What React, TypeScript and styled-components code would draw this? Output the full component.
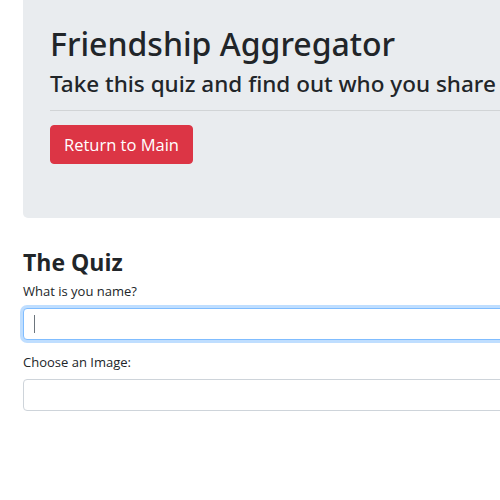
import React from "react";
import styled, { createGlobalStyle } from "styled-components";

const Global = createGlobalStyle`
  html, body { margin: 0; padding: 0; background: #fff; overflow: hidden; }
  body {
    font-family: "Open Sans", "Noto Sans", "Liberation Sans", sans-serif;
    color: #212529;
    font-size: 13px;
    line-height: 1.5;
  }
`;

const Page = styled.div`
  width: 760px;
  padding-left: 23px;
`;

const Jumbotron = styled.section`
  background: #e9ecef;
  border-radius: 0 0 5px 5px;
  padding: 24px 27px 54px;
`;

const Title = styled.h1`
  margin: 0 0 6px;
  font-family: "Noto Sans", "Open Sans", sans-serif;
  font-size: 32px;
  font-weight: 500;
  line-height: 40px;
  white-space: nowrap;
`;

const Subtitle = styled.h3`
  margin: 0;
  font-family: "Noto Sans", "Open Sans", sans-serif;
  font-size: 22.5px;
  font-weight: 500;
  line-height: 28px;
  white-space: nowrap;
`;

const Rule = styled.hr`
  margin: 12px 0 14px;
  border: 0;
  border-top: 1px solid rgba(0, 0, 0, 0.1);
`;

const DangerButton = styled.button`
  display: inline-block;
  height: 39px;
  padding: 2px 13px 0;
  background: #dc3545;
  border: 1px solid #dc3545;
  border-radius: 4px;
  color: #fff;
  font-family: inherit;
  font-size: 16.5px;
  line-height: 1;
  cursor: pointer;
`;

const QuizTitle = styled.h3`
  margin: 30px 0 6px;
  font-size: 23px;
  font-weight: 700;
  line-height: 28px;
`;

const Label = styled.label`
  display: block;
  margin-bottom: 6.5px;
  font-size: 13px;
  line-height: 19.5px;
`;

const Group = styled.div`
  margin-bottom: 13px;
`;

const Field = styled.div<{ $focused?: boolean }>`
  position: relative;
  box-sizing: border-box;
  height: 32px;
  border: 1px solid ${(p) => (p.$focused ? "#80bdff" : "#ced4da")};
  border-radius: 4px;
  background: #fff;
  box-shadow: ${(p) => (p.$focused ? "0 0 0 3px rgba(0,123,255,0.25)" : "none")};
`;

const Input = styled.input`
  box-sizing: border-box;
  width: 100%;
  height: 100%;
  border: 0;
  outline: none;
  background: transparent;
  padding: 0 10px;
  font-family: inherit;
  font-size: 13px;
  color: #495057;
  caret-color: transparent;
`;

const Caret = styled.span`
  position: absolute;
  left: 10px;
  top: 6px;
  width: 1px;
  height: 18px;
  background: #6c757d;
`;

export default function App() {
  return (
    <>
      <Global />
      <Page>
        <Jumbotron>
          <Title>Friendship Aggregator</Title>
          <Subtitle>Take this quiz and find out who you share</Subtitle>
          <Rule />
          <DangerButton>Return to Main</DangerButton>
        </Jumbotron>
        <QuizTitle>The Quiz</QuizTitle>
        <Group>
          <Label>What is you name?</Label>
          <Field $focused>
            <Input type="text" />
            <Caret />
          </Field>
        </Group>
        <Group>
          <Label>Choose an Image:</Label>
          <Field>
            <Input type="text" />
          </Field>
        </Group>
      </Page>
    </>
  );
}
